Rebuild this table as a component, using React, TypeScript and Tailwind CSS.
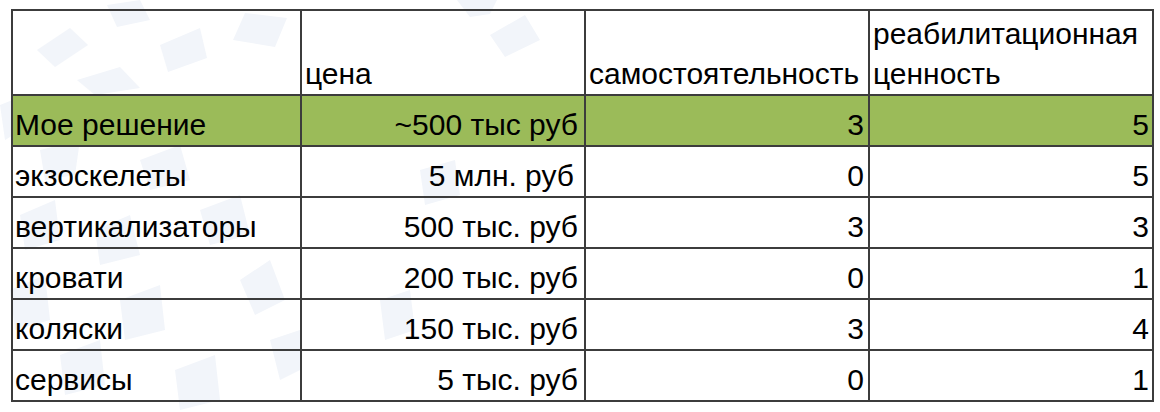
const header = ["", "цена", "самостоятельность", "реабилитационная ценность"];

const rows = [
  { name: "Мое решение", price: "~500 тыс руб", self: "3", rehab: "5", highlight: true },
  { name: "экзоскелеты", price: "5 млн. руб", self: "0", rehab: "5", pricePad: "pr-[10px]" },
  { name: "вертикализаторы", price: "500 тыс. руб", self: "3", rehab: "3" },
  { name: "кровати", price: "200 тыс. руб", self: "0", rehab: "1" },
  { name: "коляски", price: "150 тыс. руб", self: "3", rehab: "4" },
  { name: "сервисы", price: "5 тыс. руб", self: "0", rehab: "1" },
];

// faint slide watermark behind the table
const shapes = [
  "37,50 70,28 88,45 55,67",
  "107,5 140,0 150,20 117,27",
  "160,45 200,28 207,58 168,72",
  "233,40 245,13 287,18 275,47",
  "77,80 120,67 140,88 95,95",
  "457,0 497,0 490,14 470,17",
  "490,35 525,15 540,40 505,57",
  "0,105 25,95 30,125 5,140",
  "40,150 80,140 75,175 45,180",
  "140,160 180,145 190,180 150,190",
  "20,215 55,200 60,240 25,250",
  "95,230 130,215 140,255 100,265",
  "200,210 240,195 250,235 210,245",
  "10,290 45,275 50,320 15,330",
  "120,300 160,285 165,330 125,340",
  "240,280 270,260 285,300 255,315",
  "60,355 100,340 105,385 65,395",
  "175,370 215,355 220,400 180,410",
  "270,340 300,330 300,370 280,380",
  "420,170 455,160 460,195 425,205",
  "380,300 410,290 415,330 385,340",
];

function Cell({ children, right, className = "" }: { children?: React.ReactNode; right?: boolean; className?: string }) {
  return (
    <div className={`flex items-end border-r-2 border-b-2 border-[#3c3c3c] leading-[40px] ${right ? "justify-end" : ""} ${className}`}>
      {children}
    </div>
  );
}

export default function App() {
  return (
    <div className="relative w-[1160px] h-[412px] bg-white overflow-hidden" style={{ fontFamily: '"Liberation Sans", Arial, sans-serif' }}>
      <svg className="absolute inset-0" width="1160" height="412">
        {shapes.map((p, i) => (
          <polygon key={i} points={p} fill="#f2f5fa" />
        ))}
      </svg>

      <div className="relative pl-[11px] pt-[9px]">
        <div className="grid grid-cols-[289px_284px_284px_284px] border-l-2 border-t-2 border-[#3c3c3c] text-[30px] text-black w-max">
          {header.map((h, i) => (
            <Cell key={i} className={`h-[85px] ${i === 0 ? "pl-[2px]" : "pl-[3px]"}`}>
              <span>{h}</span>
            </Cell>
          ))}

          {rows.map((r) => {
            const bg = r.highlight ? "bg-[#9bbb59]" : "";
            return (
              <div key={r.name} className="contents">
                <Cell className={`h-[51px] pl-[2px] ${bg}`}>{r.name}</Cell>
                <Cell right className={`h-[51px] ${r.pricePad ?? "pr-[6px]"} ${bg}`}>{r.price}</Cell>
                <Cell right className={`h-[51px] pr-[4px] ${bg}`}>{r.self}</Cell>
                <Cell right className={`h-[51px] pr-[3px] ${bg}`}>{r.rehab}</Cell>
              </div>
            );
          })}
        </div>
      </div>
    </div>
  );
}
